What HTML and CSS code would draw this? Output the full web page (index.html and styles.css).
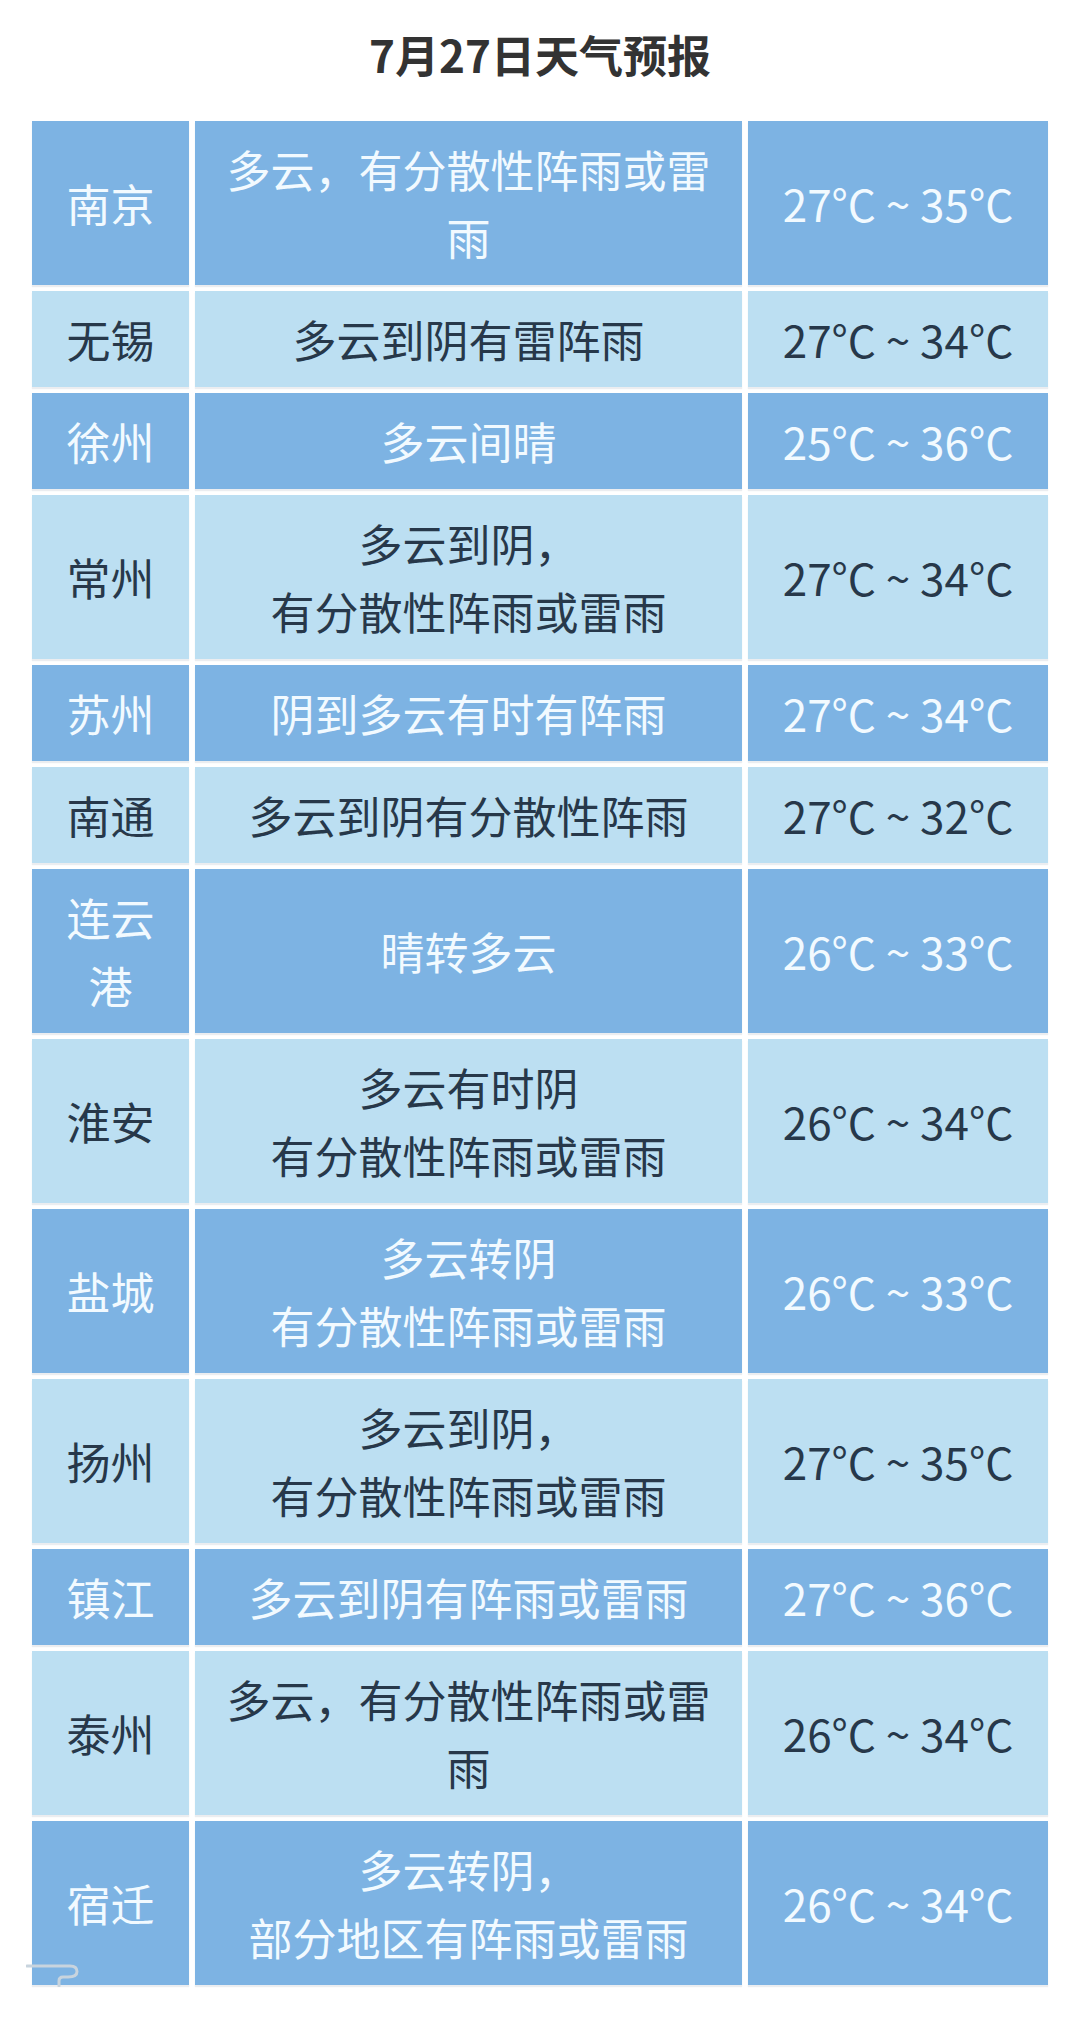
FILE: index.html
```html
<!DOCTYPE html>
<html lang="zh-CN">
<head>
<meta charset="utf-8">
<title>7月27日天气预报</title>
<link rel="stylesheet" href="styles.css">
</head>
<body>
<div class="page">
  <h1 class="title">7月27日天气预报</h1>
  <div class="table">
    <div class="row dark"><div class="cell city">南京</div><div class="cell desc">多云，有分散性阵雨或雷雨</div><div class="cell temp">27°C ~ 35°C</div></div>
    <div class="row light"><div class="cell city">无锡</div><div class="cell desc">多云到阴有雷阵雨</div><div class="cell temp">27°C ~ 34°C</div></div>
    <div class="row dark"><div class="cell city">徐州</div><div class="cell desc">多云间晴</div><div class="cell temp">25°C ~ 36°C</div></div>
    <div class="row light"><div class="cell city">常州</div><div class="cell desc">多云到阴，<br>有分散性阵雨或雷雨</div><div class="cell temp">27°C ~ 34°C</div></div>
    <div class="row dark"><div class="cell city">苏州</div><div class="cell desc">阴到多云有时有阵雨</div><div class="cell temp">27°C ~ 34°C</div></div>
    <div class="row light"><div class="cell city">南通</div><div class="cell desc">多云到阴有分散性阵雨</div><div class="cell temp">27°C ~ 32°C</div></div>
    <div class="row dark"><div class="cell city">连云港</div><div class="cell desc">晴转多云</div><div class="cell temp">26°C ~ 33°C</div></div>
    <div class="row light"><div class="cell city">淮安</div><div class="cell desc">多云有时阴<br>有分散性阵雨或雷雨</div><div class="cell temp">26°C ~ 34°C</div></div>
    <div class="row dark"><div class="cell city">盐城</div><div class="cell desc">多云转阴<br>有分散性阵雨或雷雨</div><div class="cell temp">26°C ~ 33°C</div></div>
    <div class="row light"><div class="cell city">扬州</div><div class="cell desc">多云到阴，<br>有分散性阵雨或雷雨</div><div class="cell temp">27°C ~ 35°C</div></div>
    <div class="row dark"><div class="cell city">镇江</div><div class="cell desc">多云到阴有阵雨或雷雨</div><div class="cell temp">27°C ~ 36°C</div></div>
    <div class="row light"><div class="cell city">泰州</div><div class="cell desc">多云，有分散性阵雨或雷雨</div><div class="cell temp">26°C ~ 34°C</div></div>
    <div class="row dark"><div class="cell city">宿迁</div><div class="cell desc">多云转阴，<br>部分地区有阵雨或雷雨</div><div class="cell temp">26°C ~ 34°C</div></div>
    <svg class="squiggle" width="54" height="24" viewBox="0 0 54 24" aria-hidden="true">
      <path d="M1 3 H44 Q51 3 51 8.5 Q51 14 42 14 H37 Q33 14 33 18 V23" fill="none" stroke="#c8d4de" stroke-width="3" stroke-linecap="round" stroke-linejoin="round"/>
    </svg>
  </div>
</div>
</body>
</html>
```
FILE: styles.css
```css
html, body {
  margin: 0;
  padding: 0;
  background: #ffffff;
}

body {
  font-family: "Noto Sans CJK SC", "Noto Sans", sans-serif;
  width: 1080px;
  min-height: 2041px;
}

.page {
  padding-top: 24px;
}

.title {
  margin: 0;
  height: 60px;
  line-height: 60px;
  text-align: center;
  font-size: 44px;
  font-weight: 700;
  color: #333333;
}

.table {
  position: relative;
  margin: 37px 0 0 32px;
  width: 1016px;
  display: flex;
  flex-direction: column;
  gap: 6px;
}

.row {
  display: grid;
  grid-template-columns: 157px 547px 300px;
  column-gap: 6px;
}

.cell {
  display: flex;
  align-items: center;
  justify-content: center;
  text-align: center;
  font-size: 44px;
  line-height: 68px;
  padding: 14px 0;
  box-shadow: 0 2px 1px rgba(90, 110, 130, 0.12);
}

.city {
  padding-left: 14px;
  padding-right: 14px;
}

.desc {
  padding-left: 24px;
  padding-right: 24px;
}

.temp {
  white-space: nowrap;
}

.dark .cell {
  background: #7db3e3;
  color: #f2faff;
}

.light .cell {
  background: #bcdff2;
  color: #27384a;
}

.squiggle {
  position: absolute;
  left: -6px;
  bottom: -2px;
}
```
